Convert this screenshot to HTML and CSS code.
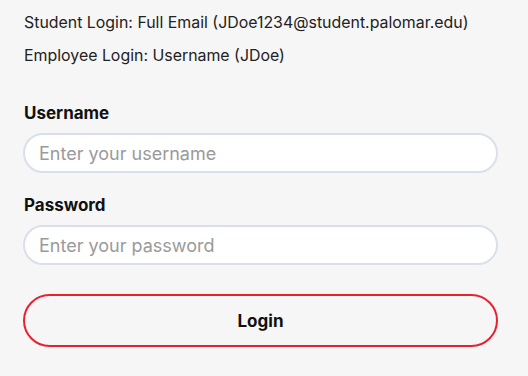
FILE: index.html
```html
<!DOCTYPE html>
<html>
<head>
<meta charset="utf-8">
<link rel="stylesheet" href="styles.css">
</head>
<body>
<div class="page">
  <div class="notes">
    <p class="note">Student Login: Full Email (JDoe1234@student.palomar.edu)</p>
    <p class="note">Employee Login: Username (JDoe)</p>
  </div>
  <form class="form">
    <div class="field">
      <label class="label">Username</label>
      <input class="input" type="text" placeholder="Enter your username">
    </div>
    <div class="field">
      <label class="label">Password</label>
      <input class="input" type="password" placeholder="Enter your password">
    </div>
    <button class="btn" type="button">Login</button>
  </form>
</div>
</body>
</html>
```

FILE: styles.css
```css
html, body {
  margin: 0;
  padding: 0;
  background: #f6f6f6;
}
.page {
  padding: 13px 30px 0 23px;
  font-family: Inter, Roboto, "Liberation Sans", sans-serif;
  color: #222;
}
.notes {
  display: flex;
  flex-direction: column;
  gap: 13px;
  padding-left: 1px;
}
.note {
  margin: 0;
  font-size: 15.9px;
  line-height: 20px;
}
.form {
  display: flex;
  flex-direction: column;
  margin-top: 37px;
}
.field {
  display: flex;
  flex-direction: column;
  gap: 10px;
  margin-bottom: 22px;
}
.label {
  font-size: 17px;
  font-weight: 700;
  line-height: 20px;
  color: #111;
  padding-left: 1px;
}
.input {
  box-sizing: border-box;
  height: 40px;
  width: 100%;
  border: 2px solid #d9e0ea;
  border-radius: 20px;
  background: #fff;
  padding: 0 14px;
  font-family: Inter, Roboto, "Liberation Sans", sans-serif;
  font-size: 18px;
  color: #222;
  outline: none;
}
.input::placeholder {
  color: #9a9a9a;
}
.btn {
  box-sizing: border-box;
  margin-top: 7px;
  height: 53px;
  width: 100%;
  border: 2px solid #e8212e;
  border-radius: 27px;
  background: transparent;
  font-family: Inter, Roboto, "Liberation Sans", sans-serif;
  font-size: 17px;
  font-weight: 700;
  color: #111;
}
```
